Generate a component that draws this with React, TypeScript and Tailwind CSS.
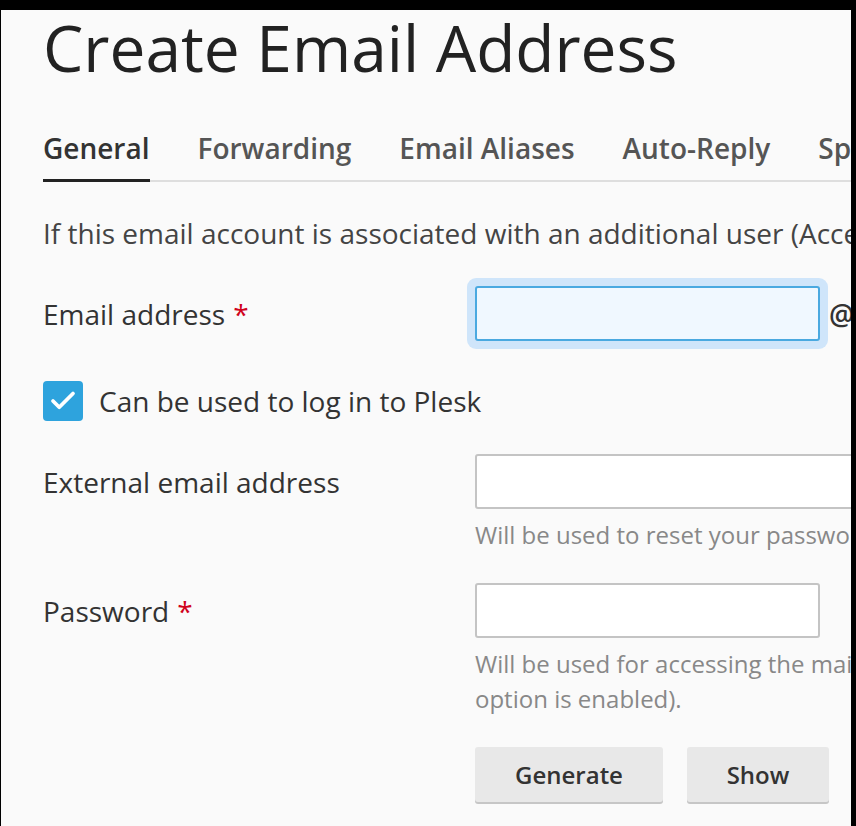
import { Check } from 'lucide-react'

const tabs = ['General', 'Forwarding', 'Email Aliases', 'Auto-Reply', 'Spam Filter']

function Label({ text, required }: { text: string; required?: boolean }) {
  return (
    <div className="w-[432px] shrink-0 text-[28px] text-[#333]">
      {text}
      {required && <span className="ml-[8px] text-[#d0021b]">*</span>}
    </div>
  )
}

export default function App() {
  return (
    <div className="h-[826px] w-[856px] bg-black pt-[10px] pl-[1px] pr-[5px] font-['Open_Sans',sans-serif]">
      <div className="h-full overflow-hidden bg-[#fafafa] pl-[42px]">
        {/* Title */}
        <h1 className="mt-[2px] whitespace-nowrap text-[64px] leading-[72px] text-[#222]">Create Email Address</h1>

        {/* Tabs */}
        <div className="mt-[46px] flex gap-[48px] whitespace-nowrap border-b-2 border-[#dedede]">
          {tabs.map((t, i) => (
            <div
              key={t}
              className={`-mb-[2px] pb-[13px] text-[28px] font-semibold leading-[36px] ${
                i === 0 ? 'border-b-[3px] border-[#222] text-[#333]' : 'border-b-[3px] border-transparent text-[#555]'
              }`}
            >
              {t}
            </div>
          ))}
        </div>

        {/* Intro */}
        <p className="mt-[33px] whitespace-nowrap text-[28px] leading-[36px] text-[#444]">
          If this email account is associated with an additional user (Access to Plesk option is enabled), the user can log in
        </p>

        {/* Email address */}
        <div className="mt-[35px] flex items-center">
          <Label text="Email address" required />
          <div className="h-[55px] w-[345px] shrink-0 rounded-[3px] border-2 border-[#4aa9e0] bg-[#f0f8ff] shadow-[0_0_0_8px_#cfe5fa]" />
          <span className="ml-[9px] text-[28px] font-semibold text-[#333]">@</span>
        </div>

        {/* Checkbox */}
        <label className="mt-[39px] flex items-center gap-[16px]">
          <span className="flex h-[40px] w-[40px] items-center justify-center rounded-[4px] bg-[#2ea3dd]">
            <Check className="h-[30px] w-[30px] text-white" strokeWidth={3} />
          </span>
          <span className="whitespace-nowrap text-[28px] text-[#333]">Can be used to log in to Plesk</span>
        </label>

        {/* External email */}
        <div className="mt-[32px] flex">
          <div className="flex h-[55px] items-center">
            <Label text="External email address" />
          </div>
          <div>
            <div className="h-[55px] w-[480px] rounded-[3px] border-2 border-[#c4c4c4] bg-white" />
            <p className="mt-[8px] whitespace-nowrap text-[24px] leading-[35px] text-[#888]">
              Will be used to reset your password if you forget it.
            </p>
          </div>
        </div>

        {/* Password */}
        <div className="mt-[31px] flex">
          <div className="flex h-[55px] items-center">
            <Label text="Password" required />
          </div>
          <div>
            <div className="h-[55px] w-[345px] rounded-[3px] border-2 border-[#c4c4c4] bg-white" />
            <p className="mt-[8px] w-[640px] text-[24px] leading-[35px] text-[#888]">
              Will be used for accessing the mailbox (and Plesk, if the option is enabled).
            </p>
            <div className="mt-[31px] flex gap-[24px]">
              <button className="h-[55px] w-[188px] rounded-[3px] bg-[#e8e8e8] text-[24px] font-semibold text-[#333] shadow-[0_2px_0_#c6c6c6]">
                Generate
              </button>
              <button className="h-[55px] w-[142px] rounded-[3px] bg-[#e8e8e8] text-[24px] font-semibold text-[#333] shadow-[0_2px_0_#c6c6c6]">
                Show
              </button>
            </div>
          </div>
        </div>
      </div>
    </div>
  )
}
